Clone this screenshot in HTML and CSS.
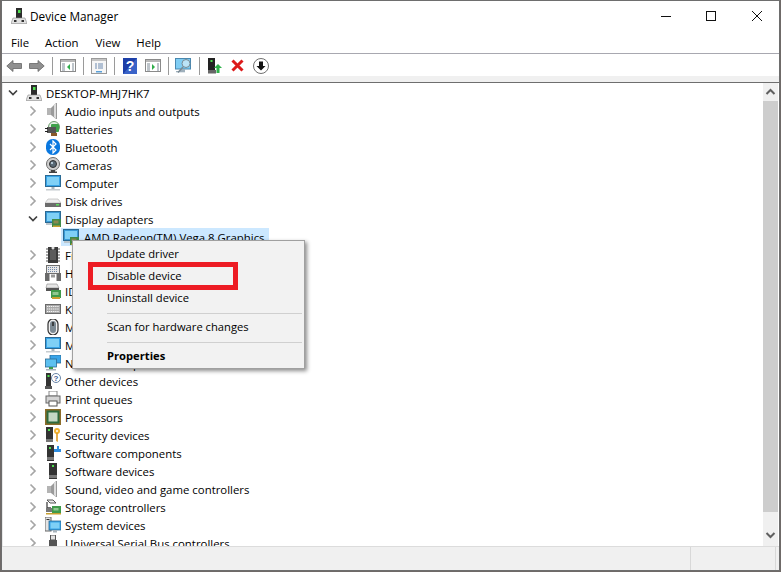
FILE: index.html
```html
<!DOCTYPE html>
<html lang="en">
<head>
<meta charset="utf-8">
<title>Device Manager</title>
<link rel="stylesheet" href="styles.css">
</head>
<body>
<svg class="defs" aria-hidden="true">
  <symbol id="chev-r" viewBox="0 0 8 12"><path d="M1.5 1.5 6 6l-4.500 4.500" fill="none" stroke="#a6a6a6" stroke-width="1.700"/></symbol>
  <symbol id="chev-d" viewBox="0 0 10 8"><path d="M1 1.500 5 5.500l4-4" fill="none" stroke="#404040" stroke-width="1.700"/></symbol>
  <symbol id="tower" viewBox="0 0 16 16"><path d="M5 0h6v11H5z" fill="#2c2c2c"/><rect x="7" y="2" width="2.500" height="3" fill="#4fe04f"/><path d="M2 10h12l2 5.500H0z" fill="#e2e2e2" stroke="#8a8a8a" stroke-width=".6"/><rect x="3" y="12" width="2.500" height="2" fill="#333"/><rect x="10.500" y="12" width="2.500" height="2" fill="#333"/></symbol>
  <symbol id="speaker" viewBox="0 0 16 16"><path d="M2 5h4v7H2z" fill="#b4b4b4"/><path d="M6 5l5-5h1v16h-1l-5-4z" fill="#9a9a9a"/><path d="M9 2l2-2v16l-2-2z" fill="#dcdcdc"/></symbol>
  <symbol id="battery" viewBox="0 0 16 16"><circle cx="9" cy="6" r="5.500" fill="#e4efe4" stroke="#6a9a6a"/><rect x="6" y="3" width="8" height="8" rx="1" fill="#3fa24a"/><rect x="2" y="6" width="9" height="6" fill="#555"/><path d="M0 7h3v1H0zM0 10h3v1H0z" fill="#222"/><path d="M6 12h6v3H6z" fill="#8a5a2a"/></symbol>
  <symbol id="bluetooth" viewBox="0 0 16 16"><rect x="1" y="0" width="14" height="16" rx="6.500" fill="#0a78e0"/><path d="M5 5l6 6-3 3V2l3 3-6 6" fill="none" stroke="#fff" stroke-width="1.200"/></symbol>
  <symbol id="camera" viewBox="0 0 16 16"><circle cx="8" cy="7" r="6.500" fill="#d0d0d0" stroke="#6a6a6a"/><circle cx="8" cy="7" r="3.500" fill="#5a6a76" stroke="#303030"/><circle cx="7" cy="6" r="1" fill="#cfe4f2"/><path d="M6 13h4v1.500h2V16H4v-1.500h2z" fill="#444"/></symbol>
  <symbol id="monitor" viewBox="0 0 16 16"><rect x=".5" y=".5" width="15" height="11" fill="#38a4e8" stroke="#2b6a94"/><rect x="2" y="2" width="12" height="8" fill="#7fd0f6"/><rect x="6.500" y="12" width="3" height="2" fill="#a8b4bc"/><rect x="1" y="14" width="14" height="1.500" fill="#c6ccd0"/></symbol>
  <symbol id="disk" viewBox="0 0 16 16"><path d="M3 6h10l3 4H0z" fill="#eeeeee" stroke="#b0b0b0" stroke-width=".6"/><rect x="0" y="10" width="16" height="4" fill="#6c6c6c"/><rect x="11" y="11" width="3" height="1.500" fill="#5fe05f"/></symbol>
  <symbol id="display" viewBox="0 0 16 16"><rect x=".5" y=".5" width="15" height="11" fill="#3a9ad6" stroke="#2b6a94"/><rect x="2" y="2" width="12" height="8" fill="#7fd0f6"/><rect x="1" y="12" width="8" height="2" fill="#bcc6cc"/><rect x="7" y="8" width="9" height="8" fill="#3f8a48"/><rect x="8.500" y="9.500" width="5" height="3" fill="#8a8a50"/><rect x="8" y="14.500" width="7" height="1.500" fill="#c8a030"/></symbol>
  <symbol id="chip" viewBox="0 0 16 16"><path d="M1 2h14M1 5h14M1 8h14M1 11h14M1 14h14" stroke="#555" stroke-width="1"/><rect x="3" y="0" width="10" height="16" fill="#3b3b3b"/><circle cx="8" cy="1" r="1.500" fill="#ddd"/><rect x="5" y="3" width="6" height="10" fill="#5c5c5c"/></symbol>
  <symbol id="hid" viewBox="0 0 16 16"><rect x="1.500" y=".5" width="13" height="8" fill="#e8e8e8" stroke="#707070"/><path d="M3 2.500h10M3 4.500h10M3 6.500h10" stroke="#7088a8" stroke-dasharray="1 1"/><path d="M0 8h4.500v8H0zM11.500 8H16v8h-4.500z" fill="#6a6a6a"/><path d="M6 9.500h4v3H6z" fill="#999"/></symbol>
  <symbol id="ide" viewBox="0 0 16 16"><path d="M2 1h10l2 4H1z" fill="#e6e6e6" stroke="#888" stroke-width=".6"/><rect x="1" y="5" width="13" height="3" fill="#555"/><rect x="6" y="7" width="10" height="8" fill="#3f9a4a"/><rect x="7.500" y="9" width="6" height="3" fill="#8fc88f"/><rect x="7" y="14" width="8" height="2" fill="#c8a030"/></symbol>
  <symbol id="keyboard" viewBox="0 0 16 16"><rect x=".5" y="3.500" width="15" height="9" fill="#a8a8a8" stroke="#6a6a6a"/><path d="M2 5.500h12M2 8h12M2 10.500h12" stroke="#f6f6f6" stroke-width="1.200" stroke-dasharray="1.200 .7"/></symbol>
  <symbol id="mouse" viewBox="0 0 16 16"><rect x="3" y="0" width="10" height="16" rx="5" fill="#f0f0f0" stroke="#303030" stroke-width="1.200"/><rect x="5" y="2" width="6" height="12" rx="3" fill="#7c8a94"/><rect x="7.200" y="3" width="1.600" height="4" fill="#2e2e2e"/></symbol>
  <symbol id="network" viewBox="0 0 16 16"><rect x="5" y="0" width="11" height="8" fill="#38a4e8" stroke="#2b6a94" stroke-width=".8"/><rect x=".5" y="4" width="11" height="8" fill="#5cc0f0" stroke="#2b6a94" stroke-width=".8"/><rect x="4" y="12" width="4" height="2" fill="#3a9a4a"/><rect x="1" y="14" width="10" height="1.500" fill="#a8b4bc"/></symbol>
  <symbol id="other" viewBox="0 0 16 16"><rect x="1" y="0" width="5" height="14" fill="#333"/><rect x="2.500" y="2" width="2" height="2" fill="#4fe04f"/><path d="M0 13h7v3H0z" fill="#555"/><circle cx="11" cy="5" r="4.500" fill="#fff" stroke="#6a86a8"/><text class="qmark" x="11" y="8">?</text></symbol>
  <symbol id="printer" viewBox="0 0 16 16"><rect x="4" y="0" width="8" height="5" fill="#fff" stroke="#888"/><rect x="1" y="5" width="14" height="7" fill="#d4d4d4" stroke="#666"/><rect x="4" y="10" width="8" height="5" fill="#fff" stroke="#555"/></symbol>
  <symbol id="cpu" viewBox="0 0 16 16"><rect x="0" y="0" width="16" height="16" fill="#8c6d2a"/><rect x="1.500" y="1.500" width="13" height="13" fill="#2e6a3c"/><rect x="3.500" y="3.500" width="9" height="9" fill="#c4d8c4"/></symbol>
  <symbol id="security" viewBox="0 0 16 16"><rect x="1" y="0" width="7" height="15" fill="#333"/><rect x="3" y="2" width="2" height="2" fill="#4fe04f"/><rect x="1" y="12" width="7" height="3" fill="#777"/><circle cx="12" cy="4" r="3" fill="#f0b030"/><circle cx="12" cy="4" r="1" fill="#fff"/><path d="M11.200 6h1.600v9l-1.600-1z" fill="#e09a20"/></symbol>
  <symbol id="component" viewBox="0 0 16 16"><rect x="2" y="0" width="7" height="16" fill="#333"/><rect x="4" y="2" width="2" height="2" fill="#4fe04f"/><rect x="2" y="12" width="7" height="3" fill="#777"/><path d="M9 4h3V1h2v3h2v3H9z" fill="#2f8ee0"/></symbol>
  <symbol id="software" viewBox="0 0 16 16"><rect x="4" y="0" width="8" height="16" fill="#333"/><rect x="7" y="2" width="2" height="2" fill="#4fe04f"/><rect x="4" y="12" width="8" height="3" fill="#777"/></symbol>
  <symbol id="storage" viewBox="0 0 16 16"><path d="M2 1h6l3 3H5z" fill="#eee" stroke="#555"/><path d="M2 3v6h4" fill="none" stroke="#444" stroke-width="1.300"/><rect x="1" y="9" width="8" height="4" fill="#777"/><rect x="7" y="7" width="9" height="7" fill="#3f9a4a"/><rect x="8.500" y="9" width="5" height="2.500" fill="#8fc88f"/><rect x="1" y="14" width="15" height="1.500" fill="#c8a030"/></symbol>
  <symbol id="system" viewBox="0 0 16 16"><rect x="0" y="0" width="6" height="14" fill="#e4e4e4" stroke="#666"/><rect x="1.500" y="2" width="3" height="1" fill="#333"/><rect x="4" y="4" width="12" height="9" fill="#38a4e8" stroke="#2b6a94" stroke-width=".8"/><rect x="5.500" y="5.500" width="9" height="6" fill="#7fd0f6"/><rect x="8" y="13" width="4" height="2.500" fill="#a8b4bc"/></symbol>
  <symbol id="usb" viewBox="0 0 16 16"><rect x="5.500" y="0" width="5" height="5" fill="#e0e0e0" stroke="#555"/><rect x="4" y="5" width="8" height="11" fill="#555"/></symbol>
  <symbol id="t-arrow-l" viewBox="0 0 16 12"><path d="M7 .5 .8 6 7 11.500V8.500h8.500v-5H7z" fill="#909090" stroke="#666" stroke-width=".8"/></symbol>
  <symbol id="t-arrow-r" viewBox="0 0 16 12"><path d="M9 .5 15.200 6 9 11.500V8.500H.5v-5H9z" fill="#909090" stroke="#666" stroke-width=".8"/></symbol>
  <symbol id="t-tree-l" viewBox="0 0 16 13"><rect x=".5" y=".5" width="15" height="12" fill="#fff" stroke="#8a8a8a"/><rect x="1" y="1" width="14" height="2" fill="#b8b8b8"/><path d="M2 5h3M2 7h3M2 9h3M2 11h3M12 5h2M12 7h2M12 9h2M12 11h2" stroke="#7d8a96"/><path d="M10 5v6L7 8z" fill="#2fae4a"/></symbol>
  <symbol id="t-tree-r" viewBox="0 0 16 13"><rect x=".5" y=".5" width="15" height="12" fill="#fff" stroke="#8a8a8a"/><rect x="1" y="1" width="14" height="2" fill="#b8b8b8"/><path d="M2 5h3M2 7h3M2 9h3M2 11h3M12 5h2M12 7h2M12 9h2M12 11h2" stroke="#7d8a96"/><path d="M7 5v6l3-3z" fill="#2fae4a"/></symbol>
  <symbol id="t-props" viewBox="0 0 16 16"><rect x=".5" y=".5" width="15" height="15" fill="#f6f6f6" stroke="#9a9a9a"/><rect x="1" y="1" width="14" height="2" fill="#c4c4c4"/><path d="M4 6h2M7 6h5M4 8h2M7 8h5M4 10h2M7 10h5" stroke="#6c8ab0"/><rect x="5" y="13" width="6" height="1.500" fill="#5aa0d8"/></symbol>
  <symbol id="t-help" viewBox="0 0 14 16"><rect width="14" height="16" fill="#1d3fa8"/><path d="M0 16 14 0v16z" fill="#3a63c8"/><text class="helpq" x="7" y="13">?</text></symbol>
  <symbol id="t-scan" viewBox="0 0 17 16"><rect x=".5" y=".5" width="15" height="10.500" fill="#7fcdf4" stroke="#4a88b0"/><rect x="5" y="11" width="5" height="2" fill="#9fb0bc"/><rect x="1" y="13" width="9" height="1.300" fill="#9fb0bc"/><circle cx="11" cy="5.500" r="4" fill="#d4ecf8" fill-opacity=".7" stroke="#7a8a94"/><path d="M8 9 3 14.500" stroke="#7a8a94" stroke-width="1.500"/></symbol>
  <symbol id="t-driver" viewBox="0 0 14 16"><rect x="0" y="0" width="7" height="14" fill="#222"/><rect x="2.500" y="2" width="2" height="2" fill="#4fe04f"/><rect x="0" y="12" width="8" height="3.500" fill="#666"/><path d="M10 6l4 4h-2.500v5h-3v-5H6z" fill="#2fb24a"/></symbol>
  <symbol id="t-x" viewBox="0 0 13 13"><path d="M1.500 1.500l10 10M11.500 1.500l-10 10" stroke="#dc1a1a" stroke-width="3"/></symbol>
  <symbol id="t-down" viewBox="0 0 16 16"><circle cx="8" cy="8" r="7.500" fill="#fff" stroke="#707070"/><path d="M6 3.500h4V8h2.500L8 12.500 3.500 8H6z" fill="#111"/></symbol>
</svg>

<div class="window">
  <header class="titlebar">
    <svg class="ico"><use href="#tower"/></svg>
    <span class="title">Device Manager</span>
    <div class="caption">
      <svg class="cap" viewBox="0 0 46 30"><path d="M20 15.500h10" stroke="#111"/></svg>
      <svg class="cap" viewBox="0 0 46 30"><rect x="19.500" y="10.500" width="9" height="9" fill="none" stroke="#111"/></svg>
      <svg class="cap" viewBox="0 0 46 30"><path d="M19 10l10 10M29 10 19 20" stroke="#111"/></svg>
    </div>
  </header>
  <nav class="menubar"><span>File</span><span>Action</span><span>View</span><span>Help</span></nav>
  <div class="toolbar">
    <span class="tb"><svg class="t16 h12"><use href="#t-arrow-l"/></svg></span>
    <span class="tb"><svg class="t16 h12"><use href="#t-arrow-r"/></svg></span>
    <i class="sep"></i>
    <span class="tb"><svg class="t16 h13"><use href="#t-tree-l"/></svg></span>
    <i class="sep"></i>
    <span class="tb"><svg class="t16"><use href="#t-props"/></svg></span>
    <i class="sep"></i>
    <span class="tb"><svg class="t14"><use href="#t-help"/></svg></span>
    <span class="tb"><svg class="t16 h13"><use href="#t-tree-r"/></svg></span>
    <i class="sep"></i>
    <span class="tb"><svg class="t17"><use href="#t-scan"/></svg></span>
    <i class="sep"></i>
    <span class="tb"><svg class="t14"><use href="#t-driver"/></svg></span>
    <span class="tb"><svg class="t13"><use href="#t-x"/></svg></span>
    <span class="tb"><svg class="t16"><use href="#t-down"/></svg></span>
  </div>
  <div class="band"></div>
  <main class="content">
    <div class="tree">
      <div class="row d0"><svg class="tog open"><use href="#chev-d"/></svg><span class="node"><svg class="ico"><use href="#tower"/></svg><span>DESKTOP-MHJ7HK7</span></span></div>
      <div class="row d1"><svg class="tog"><use href="#chev-r"/></svg><span class="node"><svg class="ico"><use href="#speaker"/></svg><span>Audio inputs and outputs</span></span></div>
      <div class="row d1"><svg class="tog"><use href="#chev-r"/></svg><span class="node"><svg class="ico"><use href="#battery"/></svg><span>Batteries</span></span></div>
      <div class="row d1"><svg class="tog"><use href="#chev-r"/></svg><span class="node"><svg class="ico"><use href="#bluetooth"/></svg><span>Bluetooth</span></span></div>
      <div class="row d1"><svg class="tog"><use href="#chev-r"/></svg><span class="node"><svg class="ico"><use href="#camera"/></svg><span>Cameras</span></span></div>
      <div class="row d1"><svg class="tog"><use href="#chev-r"/></svg><span class="node"><svg class="ico"><use href="#monitor"/></svg><span>Computer</span></span></div>
      <div class="row d1"><svg class="tog"><use href="#chev-r"/></svg><span class="node"><svg class="ico"><use href="#disk"/></svg><span>Disk drives</span></span></div>
      <div class="row d1"><svg class="tog open"><use href="#chev-d"/></svg><span class="node"><svg class="ico"><use href="#display"/></svg><span>Display adapters</span></span></div>
      <div class="row d2"><span class="tog"></span><span class="node selected"><svg class="ico"><use href="#display"/></svg><span>AMD Radeon(TM) Vega 8 Graphics</span></span></div>
      <div class="row d1"><svg class="tog"><use href="#chev-r"/></svg><span class="node"><svg class="ico"><use href="#chip"/></svg><span>Firmware</span></span></div>
      <div class="row d1"><svg class="tog"><use href="#chev-r"/></svg><span class="node"><svg class="ico"><use href="#hid"/></svg><span>Human Interface Devices</span></span></div>
      <div class="row d1"><svg class="tog"><use href="#chev-r"/></svg><span class="node"><svg class="ico"><use href="#ide"/></svg><span>IDE ATA/ATAPI controllers</span></span></div>
      <div class="row d1"><svg class="tog"><use href="#chev-r"/></svg><span class="node"><svg class="ico"><use href="#keyboard"/></svg><span>Keyboards</span></span></div>
      <div class="row d1"><svg class="tog"><use href="#chev-r"/></svg><span class="node"><svg class="ico"><use href="#mouse"/></svg><span>Mice and other pointing devices</span></span></div>
      <div class="row d1"><svg class="tog"><use href="#chev-r"/></svg><span class="node"><svg class="ico"><use href="#monitor"/></svg><span>Monitors</span></span></div>
      <div class="row d1"><svg class="tog"><use href="#chev-r"/></svg><span class="node"><svg class="ico"><use href="#network"/></svg><span>Network adapters</span></span></div>
      <div class="row d1"><svg class="tog"><use href="#chev-r"/></svg><span class="node"><svg class="ico"><use href="#other"/></svg><span>Other devices</span></span></div>
      <div class="row d1"><svg class="tog"><use href="#chev-r"/></svg><span class="node"><svg class="ico"><use href="#printer"/></svg><span>Print queues</span></span></div>
      <div class="row d1"><svg class="tog"><use href="#chev-r"/></svg><span class="node"><svg class="ico"><use href="#cpu"/></svg><span>Processors</span></span></div>
      <div class="row d1"><svg class="tog"><use href="#chev-r"/></svg><span class="node"><svg class="ico"><use href="#security"/></svg><span>Security devices</span></span></div>
      <div class="row d1"><svg class="tog"><use href="#chev-r"/></svg><span class="node"><svg class="ico"><use href="#component"/></svg><span>Software components</span></span></div>
      <div class="row d1"><svg class="tog"><use href="#chev-r"/></svg><span class="node"><svg class="ico"><use href="#software"/></svg><span>Software devices</span></span></div>
      <div class="row d1"><svg class="tog"><use href="#chev-r"/></svg><span class="node"><svg class="ico"><use href="#speaker"/></svg><span>Sound, video and game controllers</span></span></div>
      <div class="row d1"><svg class="tog"><use href="#chev-r"/></svg><span class="node"><svg class="ico"><use href="#storage"/></svg><span>Storage controllers</span></span></div>
      <div class="row d1"><svg class="tog"><use href="#chev-r"/></svg><span class="node"><svg class="ico"><use href="#system"/></svg><span>System devices</span></span></div>
      <div class="row d1"><svg class="tog"><use href="#chev-r"/></svg><span class="node"><svg class="ico"><use href="#usb"/></svg><span>Universal Serial Bus controllers</span></span></div>
    </div>
    <div class="scrollbar">
      <svg class="sb-btn" viewBox="0 0 15 18"><path d="M3.500 11 7.500 7l4 4" fill="none" stroke="#606060" stroke-width="2"/></svg>
      <div class="sb-thumb"></div>
      <svg class="sb-btn sb-down" viewBox="0 0 15 18"><path d="M3.500 7l4 4 4-4" fill="none" stroke="#606060" stroke-width="2"/></svg>
    </div>
  </main>
  <footer class="status"><div class="st-a"></div><div class="st-b"></div></footer>

  <div class="ctx">
    <div class="ctx-item">Update driver</div>
    <div class="ctx-item">Disable device</div>
    <div class="ctx-item">Uninstall device</div>
    <hr class="ctx-sep">
    <div class="ctx-item">Scan for hardware changes</div>
    <hr class="ctx-sep">
    <div class="ctx-item ctx-bold">Properties</div>
  </div>
  <div class="callout"></div>
</div>
</body>
</html>
```

FILE: styles.css
```css
* { box-sizing: border-box; }
html, body { margin: 0; height: 100%; }
body {
  background: #6f6a68;
  font-family: "Open Sans", "Liberation Sans", sans-serif;
  font-size: 11.4px;
  color: #000;
  overflow: hidden;
}
.defs { position: absolute; width: 0; height: 0; }
.qmark { font: bold 8px "Liberation Sans", sans-serif; fill: #3a5a98; text-anchor: middle; }
.helpq { font: bold 14px "Liberation Sans", sans-serif; fill: #fff; text-anchor: middle; }

.window {
  position: relative;
  width: 779px;
  height: 571px;
  margin-left: 1px;
  background: #fff;
  border: 1px solid #6e6e6e;
  display: flex;
  flex-direction: column;
}

.titlebar { height: 30px; display: flex; align-items: center; padding-left: 9px; flex: none; }
.title { margin-left: 3px; font-size: 11.8px; }
.caption { margin-left: auto; display: flex; }
.cap { width: 46px; height: 30px; display: block; }
.ico { width: 16px; height: 16px; flex: none; display: block; }

.menubar { height: 22px; display: flex; align-items: center; padding-left: 1px; border-bottom: 1px solid #a8a8b0; flex: none; box-sizing: content-box; }
.menubar span { padding: 0 8px; }
.menubar span:nth-child(2) { padding-right: 9px; }

.toolbar { height: 22px; display: flex; align-items: center; padding-top: 1px; flex: none; }
.tb { width: 23px; height: 21px; display: flex; align-items: center; justify-content: center; }
.sep { width: 8px; height: 18px; display: block; background: linear-gradient(#9a9a9a, #9a9a9a) center / 1px 100% no-repeat; }
.t16 { width: 16px; height: 16px; }
.t16.h12 { height: 12px; }
.t16.h13 { height: 13px; }
.t17 { width: 17px; height: 16px; }
.t14 { width: 14px; height: 16px; }
.t13 { width: 13px; height: 13px; }

.band { height: 7px; flex: none; background: #f0f0f0; border-bottom: 1px solid #6e6e6e; }

.content { flex: 1; min-height: 0; display: flex; border-left: 1px solid #e8e8e8; }
.tree { flex: 1; overflow: hidden; padding-top: 1px; }
.row { height: 18px; display: flex; align-items: center; white-space: nowrap; }
.d0 { padding-left: 2px; }
.d1 { padding-left: 22px; }
.d2 { padding-left: 40px; }
.tog { width: 16px; height: 12px; flex: none; display: block; }
.tog.open { height: 8px; }
.node { height: 18px; display: flex; align-items: center; gap: 4px; padding: 0 4px 0 5px; }
.d1 .node { padding-left: 4px; }
.selected { background: #cce8ff; margin-left: 2px; padding-left: 2px; gap: 5px; }

.scrollbar { width: 15px; margin-right: 1px; background: #f0f0f0; display: flex; flex-direction: column; flex: none; }
.sb-btn { width: 15px; height: 18px; flex: none; display: block; }
.sb-thumb { height: 411px; background: #cdcdcd; flex: none; }
.sb-down { margin-top: auto; margin-bottom: 2px; }

.status { height: 24px; flex: none; display: flex; background: #f0f0f0; border-top: 1px solid #dcdcdc; }
.st-a { width: 689px; border-right: 1px solid #d8d8d8; }
.st-b { width: 85px; border-right: 1px solid #d8d8d8; }

.ctx {
  position: absolute;
  left: 70px;
  top: 239px;
  width: 233px;
  height: 129px;
  background: #f2f2f2;
  border: 1px solid #a0a0a0;
  box-shadow: 2px 2px 4px rgba(0, 0, 0, .45);
  padding-top: 2px;
  font-size: 11.2px;
}
.ctx-item { height: 22px; line-height: 22px; padding-left: 34px; }
.ctx-bold { font-weight: 700; }
.ctx-sep { border: 0; height: 1px; background: #d0d0d0; margin: 4px 2px 2px 34px; }

.callout {
  position: absolute;
  left: 86px;
  top: 261px;
  width: 150px;
  height: 28px;
  border: 5px solid #ed1c24;
}
```
